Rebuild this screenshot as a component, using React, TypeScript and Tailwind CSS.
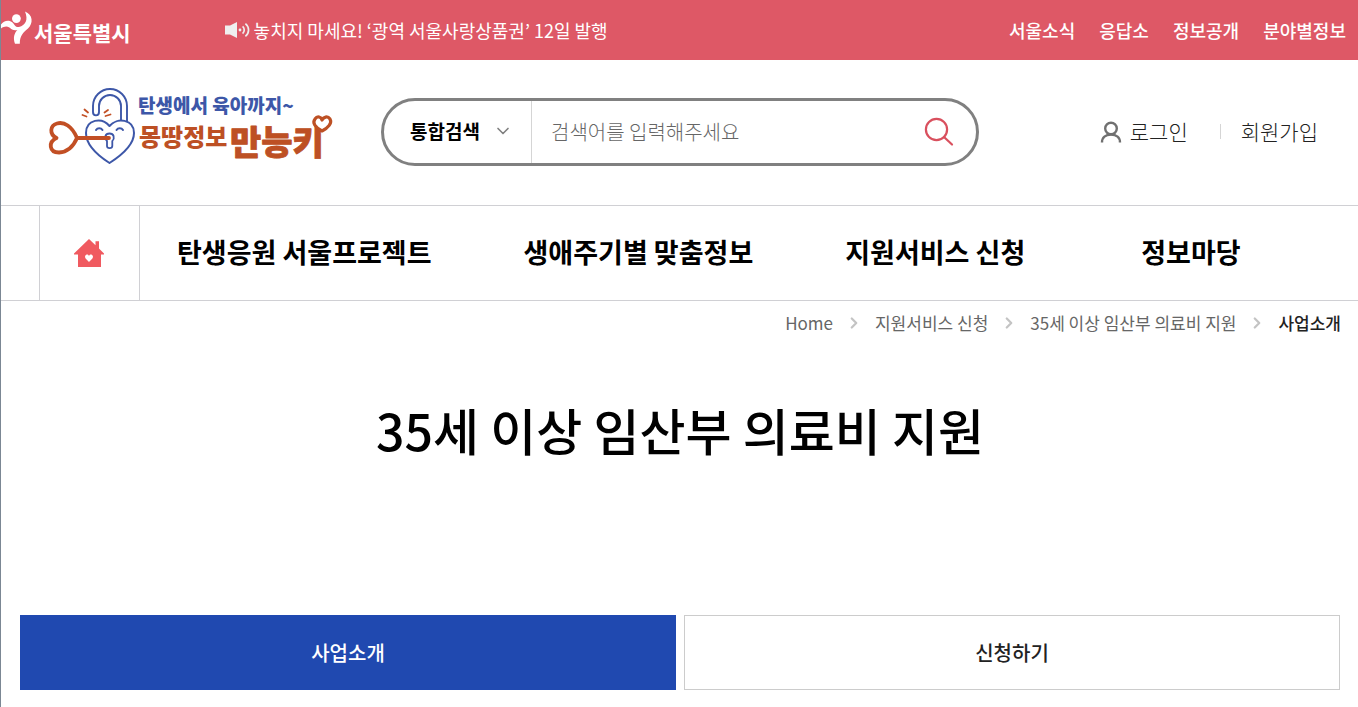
import { useState, type FormEvent } from "react"
import { ChevronDown, ChevronRight } from "lucide-react";

const topLinks = ['서울소식', '응답소', '정보공개', '분야별정보'];

const menuItems = ['탄생응원 서울프로젝트', '생애주기별 맞춤정보', '지원서비스 신청', '정보마당'];

const crumbs = ['Home', '지원서비스 신청', '35세 이상 임산부 의료비 지원'];

const tabs = ['사업소개', '신청하기'];

export default function App() {

    return (
        <div className="min-h-screen border-l border-[#7b8794] bg-white font-['Noto_Sans_CJK_KR','Noto_Sans',sans-serif] text-black">
            <TopBar />
            <Header />
            <MainMenu />
            <Breadcrumb />
            <main className="pl-[19px] pr-[18px]">
                <h1 className="mt-12 text-center text-[50px] leading-[72px] font-medium">35세 이상 임산부 의료비 지원</h1>
                <PageTabs />
            </main>
        </div>
    )
}

function TopBar() {
    return (
        <div className="flex h-[60px] items-center bg-[#de5866] pr-3 text-lg text-white">
            <a href="#" className="flex items-center">
                <SeoulSymbol />
                <span className="pt-1 text-[21px] leading-8 font-bold">서울특별시</span>
            </a>
            <a href="#" className="ml-[94px] flex items-center gap-1">
                <SpeakerIcon />
                놓치지 마세요! ‘광역 서울사랑상품권’ 12일 발행
            </a>
            <ul className="ml-auto flex gap-6 font-medium">
                {topLinks.map(link => <li key={link}><a href="#">{link}</a></li>)}
            </ul>
        </div>
    )
}

function Header() {

    const [keyword, setKeyword] = useState('');

    const onSearch = (event: FormEvent<HTMLFormElement>) => {
        event.preventDefault();
    }

    return (
        <header className="flex h-[145px] items-center pr-10 pb-0.5 pl-[39px]">
            <a href="#" className="-mt-3 shrink-0" aria-label="몽땅정보 만능키">
                <SiteLogo />
            </a>
            <form onSubmit={onSearch} className="ml-[41px] flex h-[68px] max-w-[598px] flex-1 items-center rounded-full border-3 border-[#808080]">
                <div className="relative h-full w-[148px] shrink-0 border-r border-[#d5d5d5]">
                    <select aria-label="검색 구분" className="h-full w-full appearance-none bg-transparent pl-[26px] text-[19px] font-bold outline-none">
                        <option>통합검색</option>
                    </select>
                    <ChevronDown size={20} strokeWidth={2} className="pointer-events-none absolute top-5 right-[18px] text-[#808080]" />
                </div>
                <input
                    type="text"
                    aria-label="검색어"
                    value={keyword}
                    onChange={e => setKeyword(e.target.value)}
                    placeholder="검색어를 입력해주세요"
                    className="h-full min-w-0 flex-1 pl-[19px] text-[20px] font-light outline-none placeholder:text-[#666]"
                />
                <button type="submit" aria-label="검색" className="mr-[22px]">
                    <svg width="30" height="30" viewBox="0 0 30 30" fill="none" stroke="#d9505e" strokeWidth="2.2" strokeLinecap="round">
                        <circle cx="12.5" cy="12.5" r="10.6" />
                        <path d="M20 20 L28 27.5" />
                    </svg>
                </button>
            </form>
            <div className="ml-auto flex items-center text-[21px] font-light text-[#222]">
                <a href="#" className="flex items-center gap-2">
                    <svg width="22" height="22" viewBox="0 0 22 22" fill="none" stroke="#707070" strokeWidth="2.4">
                        <circle cx="11" cy="7.5" r="5.8" />
                        <path d="M2 21.5 C2 16.5 5.5 13.6 11 13.6 C16.5 13.6 20 16.5 20 21.5" />
                    </svg>
                    로그인
                </a>
                <span className="mr-5 ml-8 h-[15px] w-px bg-[#d5d5d5]" />
                <a href="#">회원가입</a>
            </div>
        </header>
    )
}

function MainMenu() {
    return (
        <nav className="flex h-24 items-center border-y border-[#d0d0d4]">
            <a href="#" aria-label="홈" className="ml-[38px] flex h-full w-[101px] shrink-0 items-center justify-center border-x border-[#d0d0d4] pr-0.5">
                <svg width="30" height="28" viewBox="0 0 30 28">
                    <path d="M15 0 L21.5 6.3 V2.2 H25 V9.6 L30 14.6 V15.6 H27 V28 H4 V15.6 H0 V14.6 Z" fill="#f05a60" />
                    <path d="M15 23 L11.6 19.4 C9.6 16.8 13.4 13.8 15 17 C16.6 13.8 20.4 16.8 18.4 19.4 Z" fill="#fff" />
                </svg>
            </a>
            <ul className="flex gap-[92px] pb-0.5 pl-[37px] text-[27px] font-bold whitespace-nowrap">
                {menuItems.map(item => <li key={item} className="last:ml-6"><a href="#">{item}</a></li>)}
            </ul>
        </nav>
    )
}

function Breadcrumb() {
    return (
        <ol className="flex h-11 items-center justify-end pr-[17px] text-[17px] text-[#666]">
            {crumbs.map(crumb => (
                <li key={crumb} className="flex items-center">
                    <a href="#">{crumb}</a>
                    <ChevronRight size={18} strokeWidth={3} className="mx-3 text-[#c4c4c4]" />
                </li>
            ))}
            <li className="font-medium text-[#222]" aria-current="page">사업소개</li>
        </ol>
    )
}

function PageTabs() {

    const [active, setActive] = useState(0);

    return (
        <div className="mt-[150px] grid grid-cols-2 gap-2">
            {tabs.map((tab, index) => (
                <button
                    key={tab}
                    onClick={() => setActive(index)}
                    className={`h-[75px] border text-[20px] font-medium ${active === index ? 'border-[#2049b0] bg-[#2049b0] text-white' : 'border-[#ccc] bg-white text-[#222]'}`}
                >
                    {tab}
                </button>
            ))}
        </div>
    )
}

function SeoulSymbol() {
    return (
        <svg width="33" height="60" viewBox="0 0 33 60" fill="#fff">
            <circle cx="15.4" cy="18.6" r="4.4" />
            <path d="M0 24.5 C2.5 20.6 8 19.2 11.5 22.5 C14 25 14.5 27.6 18 27 C24.5 25.4 27.5 20 24 11.6 C32 14.6 32.5 23.5 27 28.6 C22 33 18.8 35.5 18.8 43.8 H14 C12 38 13 33.5 16.4 30 C12.5 30.8 10.5 29.4 8.4 27.4 C5.5 25.8 3 26.4 0 28.4 Z" />
        </svg>
    )
}

function SpeakerIcon() {
    return (
        <svg width="25" height="16" viewBox="0 0 25 16" fill="none" stroke="#efefef">
            <path d="M0 3.4 H5 L12 0 V16 L5 12.6 H0 Z" fill="#efefef" stroke="none" />
            <circle cx="15" cy="8" r="1.4" fill="#efefef" stroke="none" />
            <path d="M17.6 4.4 C19.8 6.4 19.8 9.6 17.6 11.6" strokeWidth="1.7" />
            <path d="M20.4 1.6 C24.6 5 24.6 11 20.4 14.4" strokeWidth="1.7" />
        </svg>
    )
}

function SiteLogo() {
    return (
        <svg width="300" height="90" viewBox="0 0 300 90" fill="none" strokeLinecap="round" strokeLinejoin="round">
            {/* shackle */}
            <path d="M53 31 V25 A17 17 0 0 1 87 25 V42 M81 40 V25 A11 11 0 0 0 59 25 V31 C59 35.5 53 35.5 53 31" stroke="#3d57a8" strokeWidth="1.9" />
            {/* heart body */}
            <path d="M69.5 82 C57 74 46 64 46 52 C46 38 62 36 69.5 45 C77 36 94 38 94 52 C94 64 82 74 69.5 82 Z" fill="#fff" stroke="#3d57a8" strokeWidth="2" />
            <path d="M56 49 C57.5 46.5 61 46.5 62.5 49 M76.5 49 C78 46.5 81.5 46.5 83 49" stroke="#3d57a8" strokeWidth="2" />
            <path d="M67 60 C64 57 65 52.5 69.5 52.5 C74 52.5 75 57 72.3 60 V65 C72.3 67.8 67 67.8 67 65 Z" stroke="#3d57a8" strokeWidth="1.8" />
            {/* key */}
            <g stroke="#c24f24">
                <path d="M37 57 C32 45 24 40.5 17 42.5 C10 44.5 9 53 16.5 57 C8 61 9 71.5 19 71.5 C28 71 34 64 37 57 Z" strokeWidth="3.8" />
                <path d="M37 57 H69" strokeWidth="3.8" />
                <path d="M42.5 34 L46.5 35.5 M44.5 28.5 L48 31.5 M64.5 31.5 L68 29 M65.5 35 L70.5 33.5" strokeWidth="1.8" />
            </g>
            <g className="font-black">
                <text x="98" y="32" fontSize="19" fill="#3d57a8">탄생에서 육아까지~</text>
                <text x="99" y="65" fontSize="24" fill="#bd5024">몽땅정보</text>
                <text x="190" y="74" fontSize="34" fill="#bd5024" stroke="#bd5024" strokeWidth="0.8">만능키</text>
            </g>
            <path d="M282 50 C275 46 272 42 275 38 C277.5 34.5 281 36 282 39 C283.5 36 287.5 34.5 290 38 C292.5 42 288 47 282 50 Z" fill="#fff" stroke="#bd5024" strokeWidth="3.2" />
        </svg>
    )
}
